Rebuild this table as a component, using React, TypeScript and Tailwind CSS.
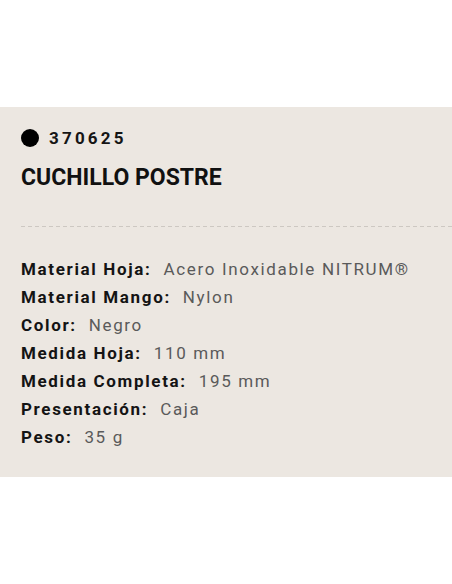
import React from "react";

const rows: [string, string][] = [
  ["Material Hoja:", "Acero Inoxidable NITRUM®"],
  ["Material Mango:", "Nylon"],
  ["Color:", "Negro"],
  ["Medida Hoja:", "110 mm"],
  ["Medida Completa:", "195 mm"],
  ["Presentación:", "Caja"],
  ["Peso:", "35 g"],
];

export default function App() {
  return (
    <div className="w-[452px] h-[584px] bg-white font-['Roboto',sans-serif]">
      <div className="h-[107px]" />
      <div className="bg-[#ece7e1] pl-[21px] pt-[20px] pb-[25px]">
        <div className="flex items-center h-[24px]">
          <span className="block shrink-0 w-[18px] h-[18px] rounded-full bg-black -translate-y-[1px]" />
          <span className="ml-[10px] text-[17px] font-bold tracking-[3.2px] text-[#151515]">370625</span>
        </div>
        <div className="mt-[13px] h-[28px] flex items-center text-[23px] font-bold text-[#111]">
          CUCHILLO POSTRE
        </div>
        <div className="mt-[34px] h-px bg-[repeating-linear-gradient(90deg,#cdc8c2_0px,#cdc8c2_4px,transparent_4px,transparent_7px)]" />
        <div className="mt-[29px] flex flex-col">
          {rows.map(([k, v]) => (
            <div key={k} className="h-[28px] flex items-center text-[17px] tracking-[1.65px]">
              <span className="font-bold text-[#141414]">{k}</span>
              <span className="ml-[12px] text-[#5a5a5a]">{v}</span>
            </div>
          ))}
        </div>
      </div>
    </div>
  );
}
